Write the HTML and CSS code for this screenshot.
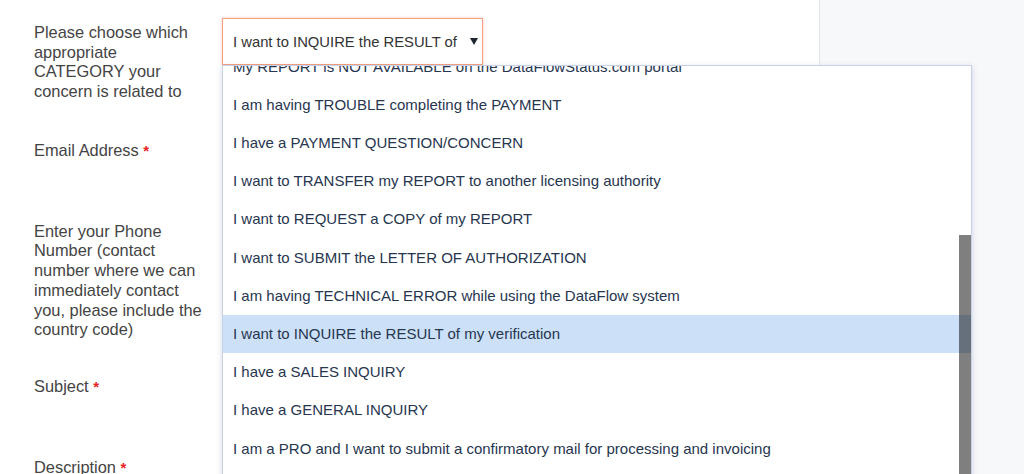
FILE: index.html
```html
<!DOCTYPE html>
<html lang="en">
<head>
    <meta charset="UTF-8">
    <meta name="viewport" content="width=device-width, initial-scale=1.0">
    <title>Contact Support</title>
    <link rel="stylesheet" href="styles.css">
</head>
<body>
    <div class="page">
        <main class="main">
            <form class="support-form">
                <div class="form-row">
                    <label class="form-label">Please choose which appropriate CATEGORY your concern is related to</label>
                    <div class="form-field">
                        <div class="select-box">
                            <span class="select-text">I want to INQUIRE the RESULT of</span>
                            <span class="select-arrow"></span>
                        </div>
                        <div class="dropdown">
                            <ul class="dropdown-list">
                                <li>My REPORT is NOT AVAILABLE on the DataFlowStatus.com portal</li>
                                <li>I am having TROUBLE completing the PAYMENT</li>
                                <li>I have a PAYMENT QUESTION/CONCERN</li>
                                <li>I want to TRANSFER my REPORT to another licensing authority</li>
                                <li>I want to REQUEST a COPY of my REPORT</li>
                                <li>I want to SUBMIT the LETTER OF AUTHORIZATION</li>
                                <li>I am having TECHNICAL ERROR while using the DataFlow system</li>
                                <li class="selected">I want to INQUIRE the RESULT of my verification</li>
                                <li>I have a SALES INQUIRY</li>
                                <li>I have a GENERAL INQUIRY</li>
                                <li>I am a PRO and I want to submit a confirmatory mail for processing and invoicing</li>
                            </ul>
                            <div class="scroll-thumb"></div>
                        </div>
                    </div>
                </div>

                <div class="form-row">
                    <label class="form-label">Email Address <span class="required">*</span></label>
                    <div class="form-field"></div>
                </div>

                <div class="form-row form-row-tall">
                    <label class="form-label">Enter your Phone Number (contact number where we can immediately contact you, please include the country code)</label>
                    <div class="form-field"></div>
                </div>

                <div class="form-row">
                    <label class="form-label">Subject <span class="required">*</span></label>
                    <div class="form-field"></div>
                </div>

                <div class="form-row">
                    <label class="form-label">Description <span class="required">*</span></label>
                    <div class="form-field"></div>
                </div>
            </form>
        </main>
        <aside class="side-panel"></aside>
    </div>
</body>
</html>
```

FILE: styles.css
```css
html, body {
    margin: 0;
    height: 474px;
    overflow: hidden;
}
body {
    font-family: "Liberation Sans", Arial, sans-serif;
    background: #fff;
}
.page {
    display: flex;
    height: 100%;
}
.main {
    flex: 1;
    padding: 18px 0 0 34px;
}
.side-panel {
    width: 204px;
    background-color: #f7f8fa;
    border-left: 1px solid #e3e6ed;
}
.form-row {
    display: flex;
    gap: 20px;
    margin-bottom: 34px;
}
.form-row-tall {
    margin-bottom: 32px;
}
.form-label {
    width: 168px;
    padding-top: 5px;
    font-size: 16.4px;
    line-height: 1.2;
    color: #444;
}
.required {
    color: #e62222;
    font-weight: bold;
    font-size: 15px;
}
.form-field {
    position: relative;
    width: 261px;
    height: 47px;
}
.select-box {
    display: flex;
    align-items: center;
    height: 45px;
    padding: 0 4px 0 10px;
    border: 1px solid #f4a183;
    box-shadow: 0 0 3px rgba(244, 140, 100, 0.45);
    background: #fff;
    font-size: 14.8px;
    color: #333;
}
.select-text {
    flex: 1;
    white-space: nowrap;
    overflow: hidden;
}
.select-arrow {
    width: 0;
    height: 0;
    border-left: 4px solid transparent;
    border-right: 4px solid transparent;
    border-top: 7px solid #1f2530;
}

/* open option list */
.dropdown {
    position: absolute;
    top: 47px;
    left: 0;
    width: 748px;
    height: 430px;
    overflow: hidden;
    background: #fff;
    border: 1px solid #c8d1e5;
    box-shadow: 0 2px 6px rgba(80, 100, 150, 0.25);
    z-index: 5;
}
.dropdown-list {
    list-style: none;
    margin: -18.5px 0 0;
    padding: 0;
}
.dropdown-list li {
    height: 38.22px;
    line-height: 38.22px;
    padding-left: 10px;
    font-size: 15px;
    color: #27364f;
    white-space: nowrap;
}
.dropdown-list li.selected {
    background-color: #cce1f8;
}
.scroll-thumb {
    position: absolute;
    top: 169px;
    right: 0;
    width: 12px;
    height: 300px;
    background: rgba(0, 0, 0, 0.5);
}
```
